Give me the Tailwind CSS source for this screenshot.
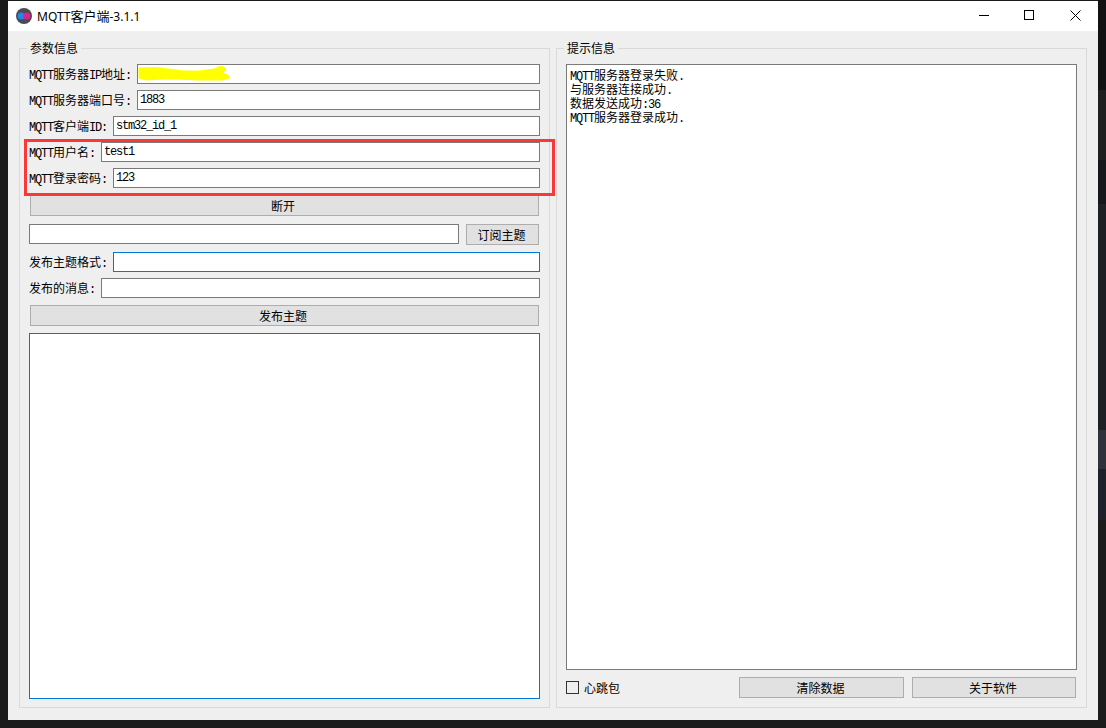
<!DOCTYPE html>
<html lang="zh-CN">
<head>
  <meta charset="UTF-8" />
  <title>MQTT客户端-3.1.1</title>
  <script src="https://cdn.jsdelivr.net/npm/@tailwindcss/browser@4"></script>
</head>
<body class="bg-[#1b1b1b] h-[728px] w-[1106px] overflow-hidden font-['Noto_Sans_CJK_SC',sans-serif] text-[12px] text-black">
  <div class="flex h-[728px]">
    <div class="w-[8px]"></div>

    <!-- window -->
    <div class="w-[1090px] pt-px">
      <!-- title bar -->
      <header class="h-[30px] bg-white flex items-center">
        <svg class="ml-[8px] w-[16px] h-[16px]" viewBox="0 0 16 16">
          <circle cx="8" cy="8" r="8" fill="#4b4b50" />
          <circle cx="5.2" cy="8" r="3.6" fill="#1e88f0" />
          <circle cx="10.8" cy="8" r="3.6" fill="#e0218a" />
        </svg>
        <span class="ml-[5px] mt-px text-[12px] leading-[16px] font-['Noto_Sans','Noto_Sans_CJK_SC',sans-serif]">MQTT<span class="text-[13px]">客户端</span>-3.1.1</span>
        <div class="ml-auto flex items-center">
          <svg class="w-[46px] h-[30px]" viewBox="0 0 46 30"><path d="M1 14.5H11" stroke="#000" fill="none" /></svg>
          <svg class="w-[46px] h-[30px]" viewBox="0 0 46 30"><rect x="0.5" y="9.5" width="9" height="9" stroke="#000" fill="none" /></svg>
          <svg class="w-[28px] h-[30px]" viewBox="0 0 28 30"><path d="M0.5 9.5L10.5 19.5M10.5 9.5L0.5 19.5" stroke="#000" fill="none" /></svg>
        </div>
      </header>

      <!-- body -->
      <main class="h-[689px] bg-[#efefef] pt-[9px] pl-[11px] flex gap-[6px]">

        <!-- 参数信息 -->
        <fieldset class="w-[531px] h-[668px] border border-[#d9d9d9] px-[9px] pb-[8px]">
          <legend class="-ml-[2px] px-[3px] leading-[16px] text-[12px]">参数信息</legend>
          <div class="pt-[8px] flex flex-col">

            <div class="flex items-center h-[20px] mb-[6px]">
              <label class="w-[108px] mt-[2px] whitespace-nowrap"><span class="font-['Liberation_Mono'] tracking-[-1.2px]">MQTT</span>服务器<span class="font-['Liberation_Mono'] tracking-[-1.2px]">IP</span>地址<span class="font-['Liberation_Mono'] tracking-[-1.2px]">:</span></label>
              <div class="relative flex-1 h-[20px] bg-white border border-[#7a7a7a]">
                <svg class="absolute left-0 top-[1px] w-[93px] h-[17px]" viewBox="0 0 93 17">
                  <path d="M1 2L18 1.5L30 3L45 5L62 5L76 3L82 .5L86 1L87 4L84 7L90 9L91 12L85 14L60 14L40 13L25 13L8 14L1 12Z" fill="#ffff00" stroke="#ffff00" stroke-width="1" stroke-linejoin="round" />
                </svg>
              </div>
            </div>

            <div class="flex items-center h-[20px] mb-[6px]">
              <label class="w-[108px] mt-[2px] whitespace-nowrap"><span class="font-['Liberation_Mono'] tracking-[-1.2px]">MQTT</span>服务器端口号<span class="font-['Liberation_Mono'] tracking-[-1.2px]">:</span></label>
              <input value="1883" class="flex-1 min-w-0 h-[20px] bg-white border border-[#7a7a7a] pl-[2px] font-['Liberation_Mono'] text-[12px] tracking-[-1.2px]" />
            </div>

            <div class="flex items-center h-[20px] mb-[6px]">
              <label class="w-[84px] mt-[2px] whitespace-nowrap"><span class="font-['Liberation_Mono'] tracking-[-1.2px]">MQTT</span>客户端<span class="font-['Liberation_Mono'] tracking-[-1.2px]">ID:</span></label>
              <input value="stm32_id_1" class="flex-1 min-w-0 h-[20px] bg-white border border-[#7a7a7a] pl-[2px] font-['Liberation_Mono'] text-[12px] tracking-[-1.2px]" />
            </div>

            <!-- marked rows, red box lies over them -->
            <div class="relative">
              <div class="absolute -left-[5px] -right-[15px] -top-[3px] -bottom-[1px] border-[3px] border-[#fb3838] pointer-events-none"></div>
              <div class="flex items-center h-[20px] mb-[6px]">
                <label class="w-[72px] mt-[2px] whitespace-nowrap"><span class="font-['Liberation_Mono'] tracking-[-1.2px]">MQTT</span>用户名<span class="font-['Liberation_Mono'] tracking-[-1.2px]">:</span></label>
                <input value="test1" class="flex-1 min-w-0 h-[20px] bg-white border border-[#7a7a7a] pl-[2px] font-['Liberation_Mono'] text-[12px] tracking-[-1.2px]" />
              </div>
              <div class="flex items-center h-[20px] mb-[7px]">
                <label class="w-[84px] mt-[2px] whitespace-nowrap"><span class="font-['Liberation_Mono'] tracking-[-1.2px]">MQTT</span>登录密码<span class="font-['Liberation_Mono'] tracking-[-1.2px]">:</span></label>
                <input value="123" class="flex-1 min-w-0 h-[20px] bg-white border border-[#7a7a7a] pl-[2px] font-['Liberation_Mono'] text-[12px] tracking-[-1.2px]" />
              </div>
            </div>

            <button class="mx-px h-[21px] mb-[8px] pr-[3px] bg-[#e1e1e1] border border-[#adadad]">断开</button>

            <div class="flex h-[21px] mb-[7px]">
              <input class="w-[430px] h-[20px] bg-white border border-[#7a7a7a]" />
              <button class="ml-[7px] w-[73px] h-[21px] pr-[2px] bg-[#e1e1e1] border border-[#adadad]">订阅主题</button>
            </div>

            <div class="flex items-center h-[20px] mb-[6px]">
              <label class="w-[84px] mt-[2px] whitespace-nowrap">发布主题格式<span class="font-['Liberation_Mono'] tracking-[-1.2px]">:</span></label>
              <input class="flex-1 min-w-0 h-[20px] bg-white border border-[#0078d7]" />
            </div>

            <div class="flex items-center h-[20px] mb-[7px]">
              <label class="w-[72px] mt-[2px] whitespace-nowrap">发布的消息<span class="font-['Liberation_Mono'] tracking-[-1.2px]">:</span></label>
              <input class="flex-1 min-w-0 h-[20px] bg-white border border-[#7a7a7a]" />
            </div>

            <button class="mx-px h-[21px] mb-[7px] pr-[3px] bg-[#e1e1e1] border border-[#adadad]">发布主题</button>

            <div class="h-[366px] bg-white border border-[#0078d7]"></div>
          </div>
        </fieldset>

        <!-- 提示信息 -->
        <fieldset class="w-[531px] h-[668px] border border-[#d9d9d9] px-[9px] pb-[8px]">
          <legend class="-ml-[2px] px-[3px] leading-[16px] text-[12px]">提示信息</legend>
          <div class="pt-[8px] flex flex-col">
            <div class="h-[606px] bg-white border border-[#7a7a7a] pl-[3px] pt-[3px] leading-[14px]">
              <p class="h-[14px]"><span class="font-['Liberation_Mono'] tracking-[-1.2px]">MQTT</span>服务器登录失败<span class="font-['Liberation_Mono'] tracking-[-1.2px]">.</span></p>
              <p class="h-[14px]">与服务器连接成功<span class="font-['Liberation_Mono'] tracking-[-1.2px]">.</span></p>
              <p class="h-[14px]">数据发送成功<span class="font-['Liberation_Mono'] tracking-[-1.2px]">:36</span></p>
              <p class="h-[14px]"><span class="font-['Liberation_Mono'] tracking-[-1.2px]">MQTT</span>服务器登录成功<span class="font-['Liberation_Mono'] tracking-[-1.2px]">.</span></p>
            </div>
            <div class="flex items-center h-[21px] mt-[7px]">
              <span class="w-[13px] h-[13px] bg-[#efefef] border border-[#333]"></span>
              <span class="ml-[5px]">心跳包</span>
              <button class="ml-auto w-[165px] h-[21px] pr-[2px] bg-[#e1e1e1] border border-[#adadad]">清除数据</button>
              <button class="ml-[8px] mr-px w-[164px] h-[21px] pr-[2px] bg-[#e1e1e1] border border-[#adadad]">关于软件</button>
            </div>
          </div>
        </fieldset>
      </main>
    </div>

    <!-- what shows behind the window on the right -->
    <div class="w-[8px] flex flex-col">
      <div class="h-[90px] bg-[#101214]"></div>
      <div class="h-[70px] bg-[#1f1f1f]"></div>
      <div class="h-[44px] bg-[#15171a]"></div>
      <div class="h-[226px] bg-[#1d2025]"></div>
      <div class="h-[39px] bg-[#30323a]"></div>
      <div class="h-[51px] bg-[#1e2127]"></div>
    </div>
  </div>
</body>
</html>
